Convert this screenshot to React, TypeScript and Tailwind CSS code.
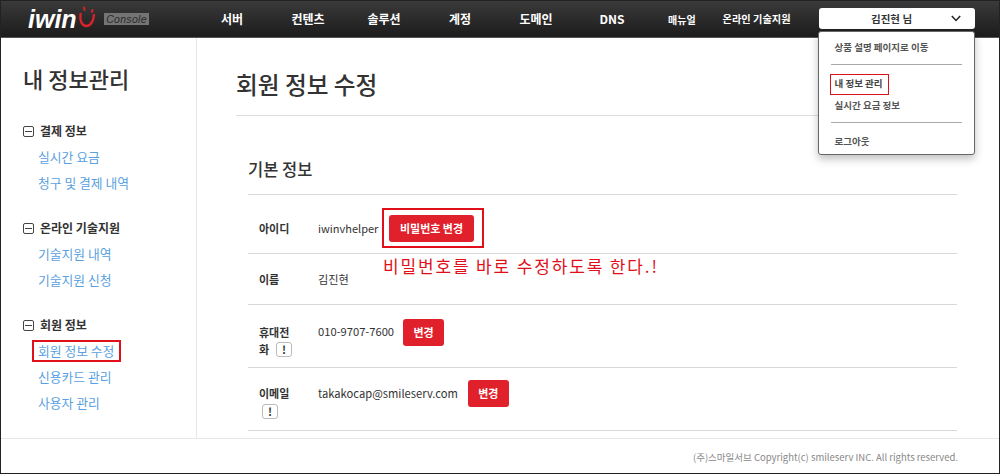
const KR = "font-['Noto_Sans_CJK_KR','Noto_Sans',sans-serif]"

const navItems = ['서버', '컨텐츠', '솔루션', '계정', '도메인', 'DNS']

const sideGroups = [
  { title: '결제 정보', links: ['실시간 요금', '청구 및 결제 내역'] },
  { title: '온라인 기술지원', links: ['기술지원 내역', '기술지원 신청'] },
  { title: '회원 정보', links: ['회원 정보 수정', '신용카드 관리', '사용자 관리'] },
]

function Bang() {
  return (
    <span className="inline-flex h-[15px] w-[16px] items-center justify-center rounded-[3px] border border-[#bbbbbb] text-[11px] font-bold leading-none text-[#333333]">
      !
    </span>
  )
}

function RedButton({ children, className }: { children: string; className: string }) {
  return (
    <button className={`flex h-[27px] shrink-0 items-center justify-center rounded-[3px] bg-[#e0202a] text-[11px] font-bold text-white ${className}`}>
      {children}
    </button>
  )
}

export default function App() {
  return (
    <div className={`flex h-[474px] w-[1000px] flex-col overflow-hidden border border-[#222222] bg-white ${KR}`}>
      {/* Top bar */}
      <header className="flex h-[37px] shrink-0 items-center border-b border-[#555555] bg-gradient-to-b from-[#3a3a3a] to-[#1c1c1c]">
        <div className="flex w-[193px] items-center pl-[27px]">
          <span className="w-[50px] font-['Liberation_Sans',sans-serif] text-[25px] font-bold italic leading-none text-white">iwin</span>
          <svg width="18" height="24" viewBox="0 0 18 24" className="-mt-[3px]">
            <path d="M2.5 8 C1.5 15 4 20 8.5 20 C12.5 20 15.5 15 16 9" fill="none" stroke="#d9222a" strokeWidth="2.4" strokeLinecap="round" />
            <path d="M6 1.5 L6.6 4" fill="none" stroke="#d9222a" strokeWidth="2" strokeLinecap="round" />
            <path d="M14.4 4 L14 6" fill="none" stroke="#d9222a" strokeWidth="2" strokeLinecap="round" />
          </svg>
          <span className="ml-[8px] flex h-[12px] w-[45px] items-center justify-center bg-[#747474] font-['Liberation_Sans',sans-serif] text-[10.5px] italic leading-none tracking-[0.3px] text-[#2a2a2a]">
            Console
          </span>
        </div>
        <nav className="flex">
          {navItems.map((item) => (
            <span key={item} className="w-[76px] text-center text-[12px] font-bold text-white">
              {item}
            </span>
          ))}
        </nav>
        <span className="ml-[18px] text-[10px] font-bold text-white">매뉴얼</span>
        <span className="ml-[27px] text-[10.2px] font-bold text-white">온라인 기술지원</span>
        <div className="relative ml-[28px] -mt-[1px] flex h-[21px] w-[156px] items-center rounded-[3px] bg-white">
          <span className="w-full pr-[10px] text-center text-[10.5px] font-bold text-[#333333]">김진현 님</span>
          <svg width="10" height="7" viewBox="0 0 10 7" className="absolute right-[14px] top-[7px]">
            <path d="M0.8 1 L5 5.5 L9.2 1" fill="none" stroke="#222222" strokeWidth="1.5" />
          </svg>
          {/* Account menu */}
          <div className="absolute -left-[1px] top-[23px] z-10 h-[124px] w-[157px] rounded-[3px] border border-[#666666] bg-white px-[12px] shadow-[0_4px_8px_rgba(0,0,0,0.25)]">
            <div className="pl-[4px] pt-[8px] text-[9.5px] font-bold leading-[14px] text-[#555555]">상품 설명 페이지로 이동</div>
            <div className="mt-[10px] h-px bg-[#aaaaaa]" />
            <div className="relative pl-[4px] pt-[11px] text-[9.5px] font-bold leading-[14px] text-[#444444]">
              내 정보 관리
              <span className="absolute -left-[1px] top-[9px] h-[21px] w-[59px] border-[1.5px] border-[#e0101a]" />
            </div>
            <div className="pl-[4px] pt-[8px] text-[9.5px] font-bold leading-[14px] text-[#555555]">실시간 요금 정보</div>
            <div className="mt-[10px] h-px bg-[#aaaaaa]" />
            <div className="pl-[4px] pt-[11px] text-[9.5px] font-bold leading-[14px] text-[#555555]">로그아웃</div>
          </div>
        </div>
      </header>

      <div className="flex min-h-0 flex-1">
        {/* Sidebar */}
        <aside className="w-[196px] shrink-0 border-r border-[#e6e6e6] pl-[22px] pt-[24px]">
          <h1 className="text-[22px] font-medium leading-[32px] text-[#333333]">내 정보관리</h1>
          <div className="mt-[27px] flex flex-col gap-[25px]">
            {sideGroups.map((group) => (
              <div key={group.title}>
                <div className="flex h-[20px] items-center gap-[6px]">
                  <span className="relative h-[11px] w-[11px] rounded-[2px] border border-[#444444]">
                    <span className="absolute left-[1px] top-[4px] h-px w-[7px] bg-[#444444]" />
                  </span>
                  <span className="text-[12px] font-bold text-[#333333]">{group.title}</span>
                </div>
                {group.links.map((link) => (
                  <div key={link} className="relative mt-[6px] h-[20px] pl-[15px] text-[12.8px] leading-[20px] text-[#5a9fe0]">
                    {link}
                    {link === '회원 정보 수정' && (
                      <span className="absolute left-[9px] top-[-1px] h-[22px] w-[89px] border-2 border-[#e0101a]" />
                    )}
                  </div>
                ))}
              </div>
            ))}
          </div>
        </aside>

        {/* Main form */}
        <main className="min-w-0 flex-1 pl-[39px] pr-[30px]">
          <div className="flex h-[78px] items-end border-b border-[#dddddd] pb-[15px]">
            <h2 className="text-[23.7px] font-medium leading-[32px] text-[#333333]">회원 정보 수정</h2>
          </div>
          <div className="px-[12px]">
            <div className="flex h-[79px] items-end border-b border-[#d8d8d8] pb-[12px] text-[16.5px] font-medium text-[#333333]">기본 정보</div>
            <div className="flex h-[59px] items-center border-b border-[#d8d8d8] pt-[8px]">
              <span className="w-[70px] pl-[11px] text-[11px] font-bold text-[#333333]">아이디</span>
              <span className="w-[60px] text-[11px] text-[#333333]">iwinvhelper</span>
              <div className="relative ml-[11px]">
                <RedButton className="w-[85px]">비밀번호 변경</RedButton>
                <span className="absolute -left-[7px] -top-[7px] h-[40px] w-[102px] border-2 border-[#e0101a]" />
                <span className="absolute -left-[6px] top-[39px] whitespace-nowrap text-[17px] leading-[24px] tracking-[1.85px] text-[#e0101a]">
                  비밀번호를 바로 수정하도록 한다.!
                </span>
              </div>
            </div>
            <div className="flex h-[51px] items-center border-b border-[#d8d8d8]">
              <span className="w-[70px] pl-[11px] text-[11px] font-bold text-[#333333]">이름</span>
              <span className="text-[11.2px] text-[#333333]">김진현</span>
            </div>
            <div className="flex h-[63px] items-start border-b border-[#d8d8d8] pt-[14px]">
              <div className="w-[70px] pl-[11px] pt-[5px] text-[11px] font-bold leading-[17px] text-[#333333]">
                <div>휴대전</div>
                <div className="flex items-center gap-[7px]">화 <Bang /></div>
              </div>
              <span className="pt-[4px] text-[11.2px] text-[#333333]">010-9707-7600</span>
              <RedButton className="ml-[9px] w-[41px]">변경</RedButton>
            </div>
            <div className="flex h-[63px] items-start border-b border-[#d8d8d8] pt-[12px]">
              <div className="w-[70px] pl-[11px] pt-[5px] text-[11px] font-bold leading-[17px] text-[#333333]">
                <div>이메일</div>
                <div className="flex pl-[3px] pt-[2px]"><Bang /></div>
              </div>
              <span className="pt-[5px] text-[11.2px] text-[#333333]">takakocap@smileserv.com</span>
              <RedButton className="ml-[10px] w-[41px]">변경</RedButton>
            </div>
          </div>
        </main>
      </div>

      {/* Footer */}
      <footer className="flex h-[35px] shrink-0 items-center justify-end border-t border-[#e6e6e6] bg-white pr-[41px] pt-[3px] text-[9.5px] text-[#888888]">
        (주)스마일서브 Copyright(c) smileserv INC. All rights reserved.
      </footer>
    </div>
  )
}
